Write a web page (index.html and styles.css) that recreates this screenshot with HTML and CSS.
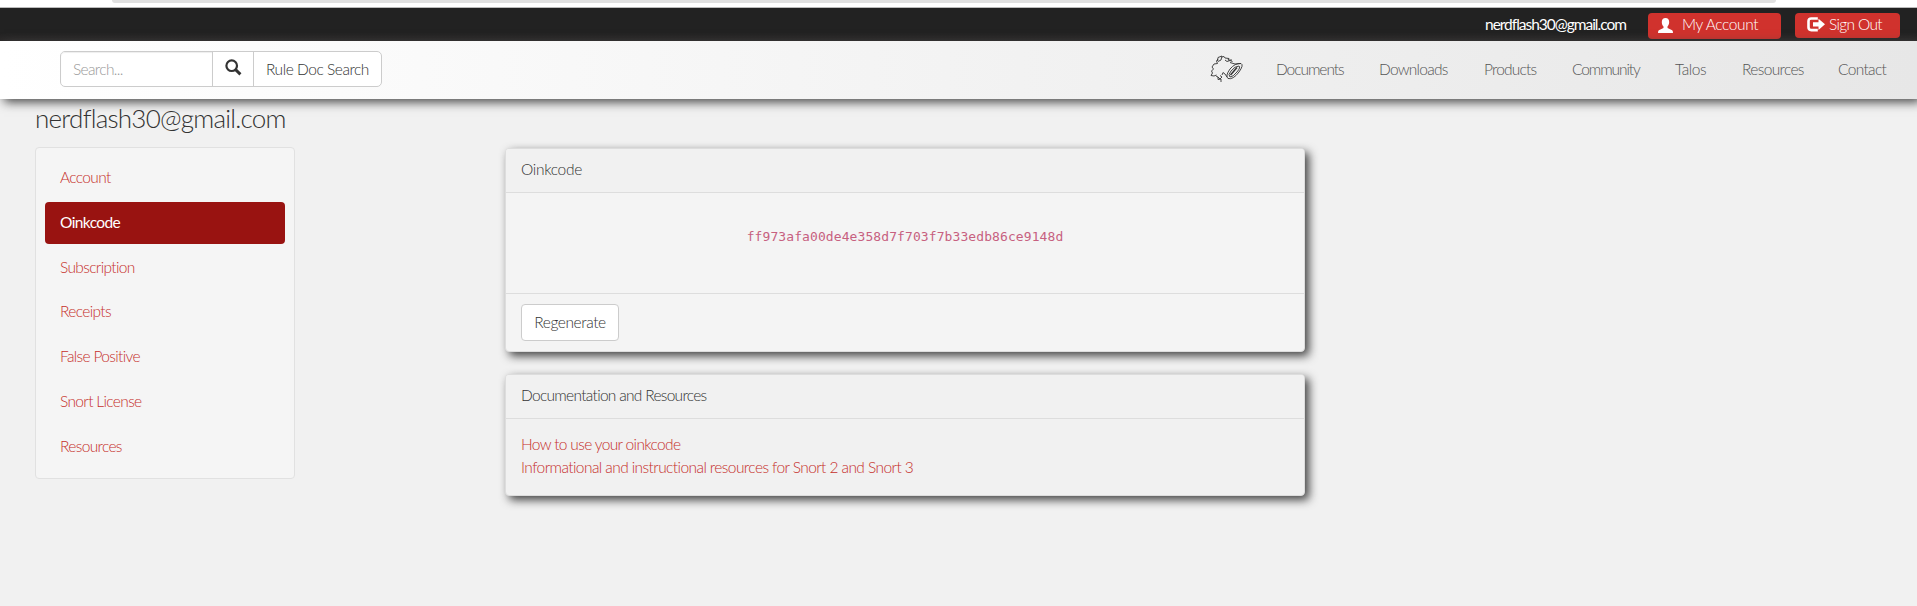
FILE: index.html
```
<!DOCTYPE html>
<html lang="en">
<head>
<meta charset="utf-8">
<title>Oinkcode</title>
<link rel="stylesheet" href="styles.css">
</head>
<body>
<div class="browser-edge"><div class="address-bar"></div></div>
<div class="topbar">
  <span class="user-email">nerdflash30@gmail.com</span>
  <a class="btn-red btn-account"><svg width="15" height="15" viewBox="0 0 15 15"><path fill="#fff" d="M7.5 0C9.8 0 11.300 1.600 11.200 4.200C11.200 6.100 10.200 7.600 9.500 8.600V10L14.200 12.200Q15 12.700 15 15H0Q0 12.700 .8 12.200L5.500 10V8.600C4.600 7.600 3.800 6.100 3.800 4.200C3.700 1.600 5.200 0 7.500 0Z"/></svg><span class="t-account">My Account</span></a>
  <a class="btn-red btn-signout"><svg width="18" height="15" viewBox="0 0 18 15"><path fill="none" stroke="#fff" stroke-width="2.600" d="M10.800 1.500H4.300Q1.500 1.500 1.500 4.300V10.300Q1.500 13.100 4.300 13.100H10.800"/><path fill="#fff" d="M6 5.200H11.500V1.700L18 7.300L11.500 12.900V9.500H6Z"/></svg><span class="t-signout">Sign Out</span></a>
</div>
<header class="navbar">
  <div class="search">
    <div class="search-field">Search...</div>
    <div class="search-button"><svg width="17" height="17" viewBox="0 0 17 17"><circle cx="6.700" cy="6.700" r="5.300" fill="none" stroke="#333" stroke-width="2.200"/><path d="M10.600 10.600L15.400 15.400" stroke="#333" stroke-width="2.900"/></svg></div>
    <div class="search-rule">Rule Doc Search</div>
  </div>
  <nav class="links">
    <svg class="pig" width="34" height="28" viewBox="0 0 34 28" fill="none" stroke="#333" stroke-width=".9"><path d="M8 4L6.500 6L7.500 8.500L4 9L2 12L3.500 14L1.500 16L2.500 18L1 20.500L4 21L6.500 20M7.500 6L8 2.500L12 1L11 5L8 6.500M12 2L14 1.500L15 3L19 3.500L18 5L22 5M15 5L17 6.500L20 5.500L22.500 6.500M20 7.500L25 9L31 8.500M6 21L8 22L8 24.500L11 24L11 27M8 22L10 24L12 22L10 20.500M12 20L13 17.500L15 19L17 22"/><path d="M31 8.500Q34 10 29 17Q23 25 18 23.500Q15 21 20 14Q25 8 31 8.500Z"/><path d="M29 11Q31 12 27 17Q23 22 20 22Q17.500 20 21 16Q25 11 29 11Z"/><path stroke-width="1.500" d="M20.500 20L27 12.500"/></svg>
    <a class="l1">Documents</a><a class="l2">Downloads</a><a class="l3">Products</a><a class="l4">Community</a><a class="l5">Talos</a><a class="l6">Resources</a><a class="l7">Contact</a>
  </nav>
</header>
<main class="page">
  <h1 class="title">nerdflash30@gmail.com</h1>
  <div class="columns">
    <aside class="sidebar">
      <a>Account</a><a class="active">Oinkcode</a><a>Subscription</a><a>Receipts</a><a>False Positive</a><a>Snort License</a><a>Resources</a>
    </aside>
    <div class="content">
      <section class="panel">
        <div class="panel-head oink">Oinkcode</div>
        <div class="panel-code">ff973afa00de4e358d7f703f7b33edb86ce9148d</div>
        <div class="panel-foot"><button class="regenerate">Regenerate</button></div>
      </section>
      <section class="panel">
        <div class="panel-head">Documentation and Resources</div>
        <div class="panel-links"><a>How to use your oinkcode</a><a class="long">Informational and instructional resources for Snort 2 and Snort 3</a></div>
      </section>
    </div>
  </div>
</main>
</body>
</html>
```
FILE: styles.css
```
* { box-sizing: border-box; }
body {
  margin: 0;
  height: 606px;
  overflow: hidden;
  background: #f1f1f1;
  color: #333;
  font: 300 15.5px/22px Lato, sans-serif;
  letter-spacing: -.65px;
  white-space: nowrap;
}
.browser-edge { height: 8px; background: #fff; border-bottom: 1px solid #bbb; }
.address-bar { width: 1664px; height: 3px; margin-left: 112px; background: #e0e0e0; border-radius: 0 0 10px 10px; }
.topbar {
  height: 33px;
  padding: 5px 17px 0 0;
  display: flex;
  justify-content: flex-end;
  align-items: flex-start;
  background: linear-gradient(#222 75%, #2b2929);
  color: #fff;
}
.user-email { width: 145px; margin: 0 18px 0 0; font-weight: 400; letter-spacing: -1.02px; }
.btn-red { display: flex; background: #d0322d; border-radius: 4px; }
.btn-red svg { margin-top: 5px; }
.btn-account { width: 133px; height: 26px; padding-left: 10px; gap: 9px; margin-right: 14px; letter-spacing: -.4px; }
.btn-signout { width: 105px; height: 25px; padding-left: 12px; gap: 4px; }
.btn-signout svg { margin-top: 4px; }
.navbar {
  position: relative;
  height: 58px;
  padding: 10px 10px 0 60px;
  display: flex;
  justify-content: space-between;
  background: linear-gradient(90deg, #fff, #fafafa 22%, #efefef 65%, #e7e7e7);
  box-shadow: 4px 3px 10px #444;
}
.search { display: flex; width: 322px; height: 36px; border: 1px solid #ccc; border-radius: 5px; background: #fff; line-height: 34px; }
.search-field { width: 151px; padding-left: 12px; color: #999; box-shadow: inset 0 1px 1px #eee; border-radius: 4px 0 0 4px; }
.search-button { width: 42px; border: solid #ccc; border-width: 0 1px; padding: 7px 0 0 12px; line-height: 0; }
.search-rule { padding-left: 12px; letter-spacing: -.46px; }
.links { display: flex; color: #555; line-height: 37px; }
.pig { margin: 4px 32px 0 0; }
.l1 { width: 103px; letter-spacing: -1.05px; }
.l2 { width: 105px; letter-spacing: -.75px; }
.l3 { width: 88px; letter-spacing: -.8px; }
.l4 { width: 103px; letter-spacing: -1.1px; }
.l5 { width: 67px; letter-spacing: -.4px; }
.l6 { width: 96px; }
.l7 { width: 69px; }
.page { padding: 4px 35px 0; }
.title { margin: 0; height: 44px; font-size: 26px; line-height: 30px; font-weight: 300; letter-spacing: -.76px; }
.columns { display: flex; gap: 210px; align-items: flex-start; }
.sidebar { width: 260px; height: 332px; padding: 9px; display: flex; flex-direction: column; gap: 2.800px; border: 1px solid #e1e1e1; border-radius: 4px; background: #f5f5f5; color: #c62f2b; }
.sidebar a { height: 42px; padding-left: 15px; line-height: 40px; border-radius: 4px; }
.sidebar .active { background: #991311; color: #fff; font-weight: 400; letter-spacing: -.6px; }
.content { width: 800px; padding-top: 1px; }
.panel { height: 204px; margin-bottom: 22px; border: 1px solid #ddd; border-radius: 4px; background: #f4f4f4; box-shadow: 4px 4px 10px #444; }
.panel + .panel { height: 122px; background: #f1f1f1; }
.panel-head { height: 44px; padding-left: 15px; line-height: 41px; border-bottom: 1px solid #ddd; background: #f1f1f1; border-radius: 3px 3px 0 0; letter-spacing: -.7px; }
.panel-head.oink { letter-spacing: -.3px; }
.panel-code { height: 100px; text-align: center; color: #c7607f; font: 13px/88px "DejaVu Sans Mono", monospace; letter-spacing: .09px; }
.panel-foot { height: 58px; padding: 10px 15px; border-top: 1px solid #ddd; }
.regenerate { width: 98px; height: 37px; padding: 0 0 2px; border: 1px solid #ccc; border-radius: 4px; background: #fff; color: #333; font: inherit; letter-spacing: -.4px; }
.panel-links { padding: 14px 15px; display: flex; flex-direction: column; line-height: 23px; color: #c62f2b; }
.panel-links .long { letter-spacing: -.58px; }
```
